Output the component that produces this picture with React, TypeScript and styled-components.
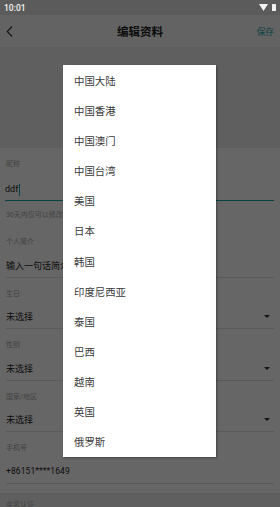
import styled, { createGlobalStyle } from 'styled-components';

const GlobalStyle = createGlobalStyle`
  html, body {
    margin: 0;
    padding: 0;
    background: #ffffff;
  }
  * {
    box-sizing: border-box;
  }
`;

const CJK = `Roboto, "Noto Sans CJK SC", sans-serif`;

const Screen = styled.div`
  position: relative;
  width: 280px;
  height: 507px;
  overflow: hidden;
  background: #ffffff;
  font-family: ${CJK};
`;

const StatusBar = styled.div`
  position: relative;
  z-index: 3;
  height: 15px;
  padding: 0 4px 0 4px;
  display: flex;
  align-items: center;
  justify-content: space-between;
  background: #5b5b5b;
  color: #f2f2f2;
  font-size: 8.5px;
  font-weight: 500;
`;

const StatusIcons = styled.div`
  display: flex;
  align-items: center;
  gap: 4px;
`;

const Header = styled.div`
  height: 32px;
  display: flex;
  align-items: center;
  justify-content: space-between;
  padding: 0 6px 0 6px;
  background: #f7f7f7;
`;

const BackButton = styled.div`
  width: 20px;
  display: flex;
  align-items: center;
`;

const Title = styled.div`
  font-size: 11.5px;
  font-weight: 700;
  color: #222;
`;

const SaveButton = styled.div`
  width: 20px;
  font-size: 8.7px;
  color: #1aa3a8;
  text-align: right;
`;

const AvatarBand = styled.div`
  height: 101px;
  background: #eeeeee;
`;

const Form = styled.div`
  padding: 0 6px;
`;

const Label = styled.div`
  height: 12px;
  line-height: 12px;
  font-size: 7px;
  color: #a8a8a8;
`;

const NicknameField = styled.div`
  padding-top: 10px;
`;

const InputRow = styled.div`
  height: 31px;
  display: flex;
  align-items: flex-end;
  padding-bottom: 4px;
  border-bottom: 1px solid #1aa3a8;
  margin-left: -1px;
  font-size: 9px;
  line-height: 14px;
  color: #222;
`;

const Caret = styled.span`
  display: inline-block;
  width: 1px;
  height: 12px;
  margin-left: 1px;
  background: #1aa3a8;
`;

const Helper = styled.div`
  margin-top: 8px;
  margin-bottom: 5px;
  height: 12px;
  line-height: 12px;
  font-size: 7px;
  color: #a8a8a8;
  white-space: nowrap;
`;

const Section = styled.div`
  padding-top: 10px;
  border-bottom: 1px solid #e2e2e2;
`;

const ValueRow = styled.div`
  margin-top: 6px;
  height: 22.5px;
  display: flex;
  align-items: center;
  justify-content: space-between;
  font-size: 9px;
  color: #1e1e1e;
`;

const DropArrow = styled.span`
  width: 0;
  height: 0;
  margin-right: 4px;
  border-left: 3px solid transparent;
  border-right: 3px solid transparent;
  border-top: 3.5px solid #333;
`;

const Phone = styled.span`
  font-size: 8.5px;
  letter-spacing: 0.1px;
`;

const Spacer = styled.div`
  height: 9px;
`;

const GrayBand = styled.div`
  height: 40px;
  padding: 6px 6px 0;
  background: #eeeeee;
`;

const Overlay = styled.div`
  position: absolute;
  left: 0;
  right: 0;
  top: 15px;
  bottom: 0;
  z-index: 1;
  background: rgba(0, 0, 0, 0.6);
`;

const Menu = styled.ul`
  position: absolute;
  z-index: 2;
  left: 63px;
  top: 65px;
  width: 153px;
  height: 392px;
  margin: 0;
  padding: 0;
  list-style: none;
  background: #ffffff;
  box-shadow: 1px 1px 2px rgba(0, 0, 0, 0.35);
  display: flex;
  flex-direction: column;
`;

const MenuItem = styled.li`
  flex: 1;
  display: flex;
  align-items: center;
  padding-left: 11px;
  font-size: 10.4px;
  color: #3a3a3a;
`;

const countries = [
  '中国大陆',
  '中国香港',
  '中国澳门',
  '中国台湾',
  '美国',
  '日本',
  '韩国',
  '印度尼西亚',
  '泰国',
  '巴西',
  '越南',
  '英国',
  '俄罗斯',
];

const selects = ['生日', '性别', '国家/地区'];

const App = () => {
  return (
    <Screen>
      <GlobalStyle />
      <StatusBar>
        <span>10:01</span>
        <StatusIcons>
          <svg width="9" height="7" viewBox="0 0 9 7">
            <path d="M0 0 H9 L4.5 7 Z" fill="#f2f2f2" />
          </svg>
          <svg width="4" height="7" viewBox="0 0 4 7">
            <rect x="0" y="0" width="4" height="7" rx="0.5" fill="#f2f2f2" />
          </svg>
        </StatusIcons>
      </StatusBar>
      <Header>
        <BackButton>
          <svg width="7" height="11" viewBox="0 0 7 11">
            <path d="M6 0.5 L1.2 5.5 L6 10.5" fill="none" stroke="#333" strokeWidth="1.1" />
          </svg>
        </BackButton>
        <Title>编辑资料</Title>
        <SaveButton>保存</SaveButton>
      </Header>
      <AvatarBand />
      <Form>
        <NicknameField>
          <Label>昵称</Label>
          <InputRow>
            ddf
            <Caret />
          </InputRow>
          <Helper>30天内仅可以修改</Helper>
        </NicknameField>
        <Section>
          <Label>个人简介</Label>
          <ValueRow>输入一句话简介</ValueRow>
        </Section>
        {selects.map((name) => (
          <Section key={name}>
            <Label>{name}</Label>
            <ValueRow>
              未选择
              <DropArrow />
            </ValueRow>
          </Section>
        ))}
        <Section>
          <Label>手机号</Label>
          <ValueRow>
            <Phone>+86151****1649</Phone>
          </ValueRow>
        </Section>
        <Spacer />
      </Form>
      <GrayBand>
        <Label>实名认证</Label>
      </GrayBand>
      <Overlay />
      <Menu>
        {countries.map((c) => (
          <MenuItem key={c}>{c}</MenuItem>
        ))}
      </Menu>
    </Screen>
  );
};

export default App;
